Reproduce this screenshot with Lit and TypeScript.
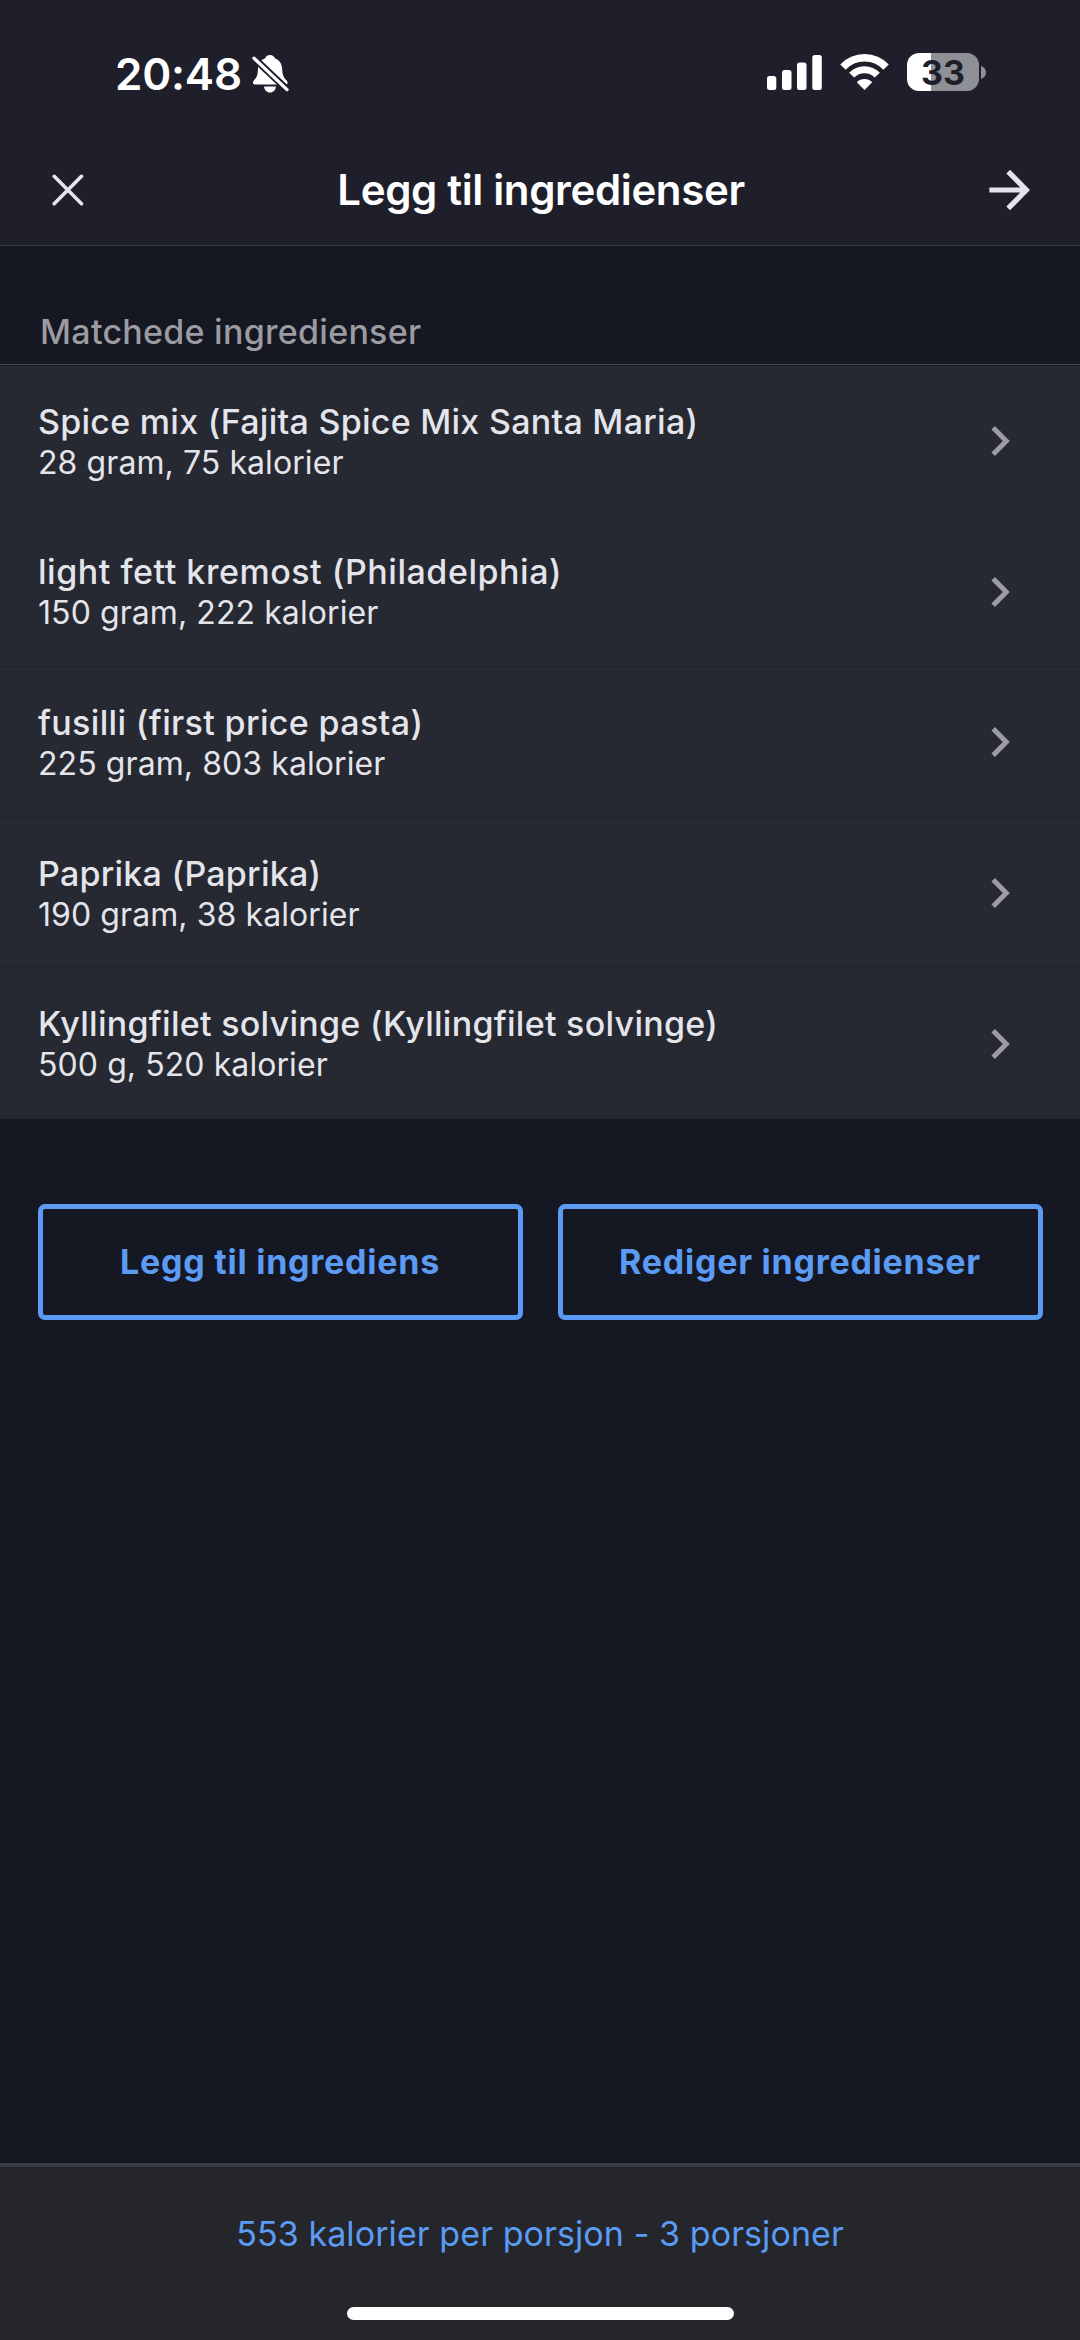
import { LitElement, html, css } from "lit";
import { customElement, property } from "lit/decorators.js";

interface Ingredient {
  name: string;
  detail: string;
  tracking: number;
}

const INGREDIENTS: Ingredient[] = [
  { name: "Spice mix (Fajita Spice Mix Santa Maria)", detail: "28 gram, 75 kalorier", tracking: 0.27 },
  { name: "light fett kremost (Philadelphia)", detail: "150 gram, 222 kalorier", tracking: 0.53 },
  { name: "fusilli (first price pasta)", detail: "225 gram, 803 kalorier", tracking: 0.36 },
  { name: "Paprika (Paprika)", detail: "190 gram, 38 kalorier", tracking: 0.24 },
  { name: "Kyllingfilet solvinge (Kyllingfilet solvinge)", detail: "500 g, 520 kalorier", tracking: 0.27 },
];

@customElement("status-bar")
export class StatusBar extends LitElement {
  static styles = css`
    :host {
      box-sizing: border-box;
      display: flex;
      align-items: center;
      justify-content: space-between;
      height: 135px;
      padding: 9px 94px 0 115px;
      background: #1e1f2a;
      color: #fff;
    }
    svg {
      display: block;
    }
    .left,
    .right,
    .battery {
      display: flex;
      align-items: center;
    }
    .left {
      gap: 10px;
      padding-top: 3px;
    }
    .right {
      gap: 18px;
    }
    .time {
      font-size: 44px;
      font-weight: 600;
      line-height: 54px;
      letter-spacing: -0.2px;
    }
    .battery {
      gap: 2px;
    }
    .cell {
      box-sizing: border-box;
      width: 72px;
      height: 38px;
      padding-top: 1px;
      border-radius: 12px;
      background: linear-gradient(90deg, #fff 33.3%, #8f8f96 33.3%);
      color: #1e1f2a;
      font-size: 34px;
      font-weight: 650;
      line-height: 38px;
      text-align: center;
    }
  `;

  render() {
    return html`
      <div class="left">
        <span class="time">20:48</span>
        <svg width="37" height="39" viewBox="0 0 37 39">
          <path
            fill="#fff"
            d="M18 1c2.600 0 4.300 1.600 4.800 3.300 4.600 1.600 7 5.500 7.300 10.200.4 5.500 1 8.300 3.600 11 1.200 1.200 1.900 2.200 1.900 3.200 0 1-.8 1.700-2 1.700H2.900c-1.200 0-2-.7-2-1.700 0-1.300.9-2.300 2.200-3.700C5.400 22.600 5.700 20 6 14.500c.3-4.700 2.600-8.600 7.200-10.200C13.700 2.600 15.400 1 18 1zM12 32.600h12c-.3 3.400-2.700 6-6 6s-5.700-2.600-6-6z"
          />
          <path d="M-1 1.300L37 37.300" stroke="#1e1f2a" stroke-width="7" />
          <path d="M2 4.200L35 35.600" stroke="#fff" stroke-width="3.300" stroke-linecap="round" />
        </svg>
      </div>
      <div class="right">
        <svg width="55" height="36" viewBox="0 0 55 36" fill="#fff">
          <rect x="0" y="22" width="9.300" height="14" rx="2.500" />
          <rect x="15" y="16" width="9.500" height="20" rx="2.500" />
          <rect x="30" y="8.500" width="9.500" height="27.500" rx="2.500" />
          <rect x="45.300" y="1" width="9.500" height="35" rx="2.500" />
        </svg>
        <svg width="49" height="36" viewBox="0.800 1.300 49 36" fill="none" stroke="#fff">
          <path d="M3.750 14.400A29.500 29.500 0 0 1 46.850 14.400" stroke-width="7.400" />
          <path d="M12.500 22.500A17.500 17.500 0 0 1 38.100 22.500" stroke-width="7" />
          <path d="M17.600 29.600A10.900 10.900 0 0 1 33 29.600L25.300 37.300z" fill="#fff" stroke="none" />
        </svg>
        <div class="battery">
          <div class="cell">33</div>
          <svg width="5" height="13" viewBox="0 0 5 13">
            <path d="M0 0C3 1 5 3.500 5 6.500S3 12 0 13z" fill="#8f8f96" />
          </svg>
        </div>
      </div>
    `;
  }
}

@customElement("nav-header")
export class NavHeader extends LitElement {
  static styles = css`
    :host {
      box-sizing: border-box;
      display: grid;
      grid-template-columns: 1fr auto 1fr;
      align-items: center;
      height: 111px;
      padding: 0 50px 0 52px;
      border-bottom: 1px solid #363742;
      background: #1e1f2a;
      color: #fff;
    }
    svg {
      display: block;
    }
    .title {
      margin: 0;
      font-size: 42px;
      font-weight: 600;
      line-height: 50px;
      letter-spacing: -0.36px;
    }
    .next {
      justify-self: end;
    }
  `;

  render() {
    return html`
      <svg width="32" height="32" viewBox="0 0 32 32" stroke="#e4e5ea" stroke-width="3.600" stroke-linecap="round">
        <path d="M2.200 2.300L29.500 29.700M29.500 2.300L2.200 29.700" />
      </svg>
      <h1 class="title">Legg til ingredienser</h1>
      <svg class="next" width="41" height="42" viewBox="0 0 41 42" fill="none" stroke="#e4e5ea" stroke-width="5.200">
        <path d="M0.400 21H37M19.200 2.700L37.400 21L19.200 39.300" />
      </svg>
    `;
  }
}

@customElement("ingredient-row")
export class IngredientRow extends LitElement {
  @property() name = "";
  @property() detail = "";
  @property({ type: Number }) tracking = 0;

  static styles = css`
    :host {
      box-sizing: border-box;
      display: flex;
      align-items: center;
      justify-content: space-between;
      height: 150.6px;
      padding: 0 70px 0 38px;
      background: #262832;
      color: #e4e5ea;
    }
    .name {
      font-size: 34px;
      font-weight: 500;
      line-height: 41px;
    }
    .detail {
      margin-top: 1px;
      font-size: 32px;
      line-height: 39px;
      letter-spacing: 0.08px;
    }
  `;

  render() {
    return html`
      <div>
        <div class="name" style="letter-spacing: ${this.tracking}px">${this.name}</div>
        <div class="detail">${this.detail}</div>
      </div>
      <svg width="19" height="30" viewBox="0 0 19 30" fill="none" stroke="#9c9ca2" stroke-width="5">
        <path d="M2.200 1.800L15.300 15L2.200 28.200" />
      </svg>
    `;
  }
}

@customElement("app-root")
export class AppRoot extends LitElement {
  static styles = css`
    :host {
      display: flex;
      flex-direction: column;
      height: 2340px;
      background: #151722;
      font-family: Inter, "Liberation Sans", sans-serif;
    }
    .section {
      margin: 0;
      padding: 65px 40px 12px;
      color: #9b9ba1;
      font-size: 34px;
      font-weight: 500;
      line-height: 41px;
      letter-spacing: 0.27px;
    }
    .list {
      padding-top: 1px;
      border-top: 1px solid #474852;
    }
    .row:not(:last-child) {
      box-shadow: inset 0 -1px #20222c;
    }
    .actions {
      display: grid;
      grid-template-columns: 1fr 1fr;
      gap: 35px;
      padding: 85px 37.5px 0;
    }
    .action {
      box-sizing: border-box;
      height: 116px;
      padding: 0;
      border: 5px solid #5b9bf3;
      border-radius: 7px;
      background: none;
      color: #5b9bf3;
      font-family: inherit;
      font-size: 34px;
      font-weight: 700;
      line-height: 41px;
      letter-spacing: 0.75px;
    }
    .footer {
      box-sizing: border-box;
      display: flex;
      flex-direction: column;
      align-items: center;
      gap: 53px;
      height: 177px;
      margin-top: auto;
      padding-top: 46px;
      border-top: 4px solid #3a3b46;
      background: #25262b;
    }
    .summary {
      color: #5b9bf3;
      font-size: 34px;
      line-height: 41px;
      letter-spacing: 0.09px;
    }
    .home {
      width: 387px;
      height: 13px;
      border-radius: 7px;
      background: #fff;
    }
  `;

  render() {
    return html`
      <status-bar></status-bar>
      <nav-header></nav-header>
      <h2 class="section">Matchede ingredienser</h2>
      <div class="list">
        ${INGREDIENTS.map(
          (item) => html`<ingredient-row
            class="row"
            .name=${item.name}
            .detail=${item.detail}
            .tracking=${item.tracking}
          ></ingredient-row>`
        )}
      </div>
      <div class="actions">
        <button class="action">Legg til ingrediens</button>
        <button class="action">Rediger ingredienser</button>
      </div>
      <div class="footer">
        <div class="summary">553 kalorier per porsjon - 3 porsjoner</div>
        <div class="home"></div>
      </div>
    `;
  }
}
